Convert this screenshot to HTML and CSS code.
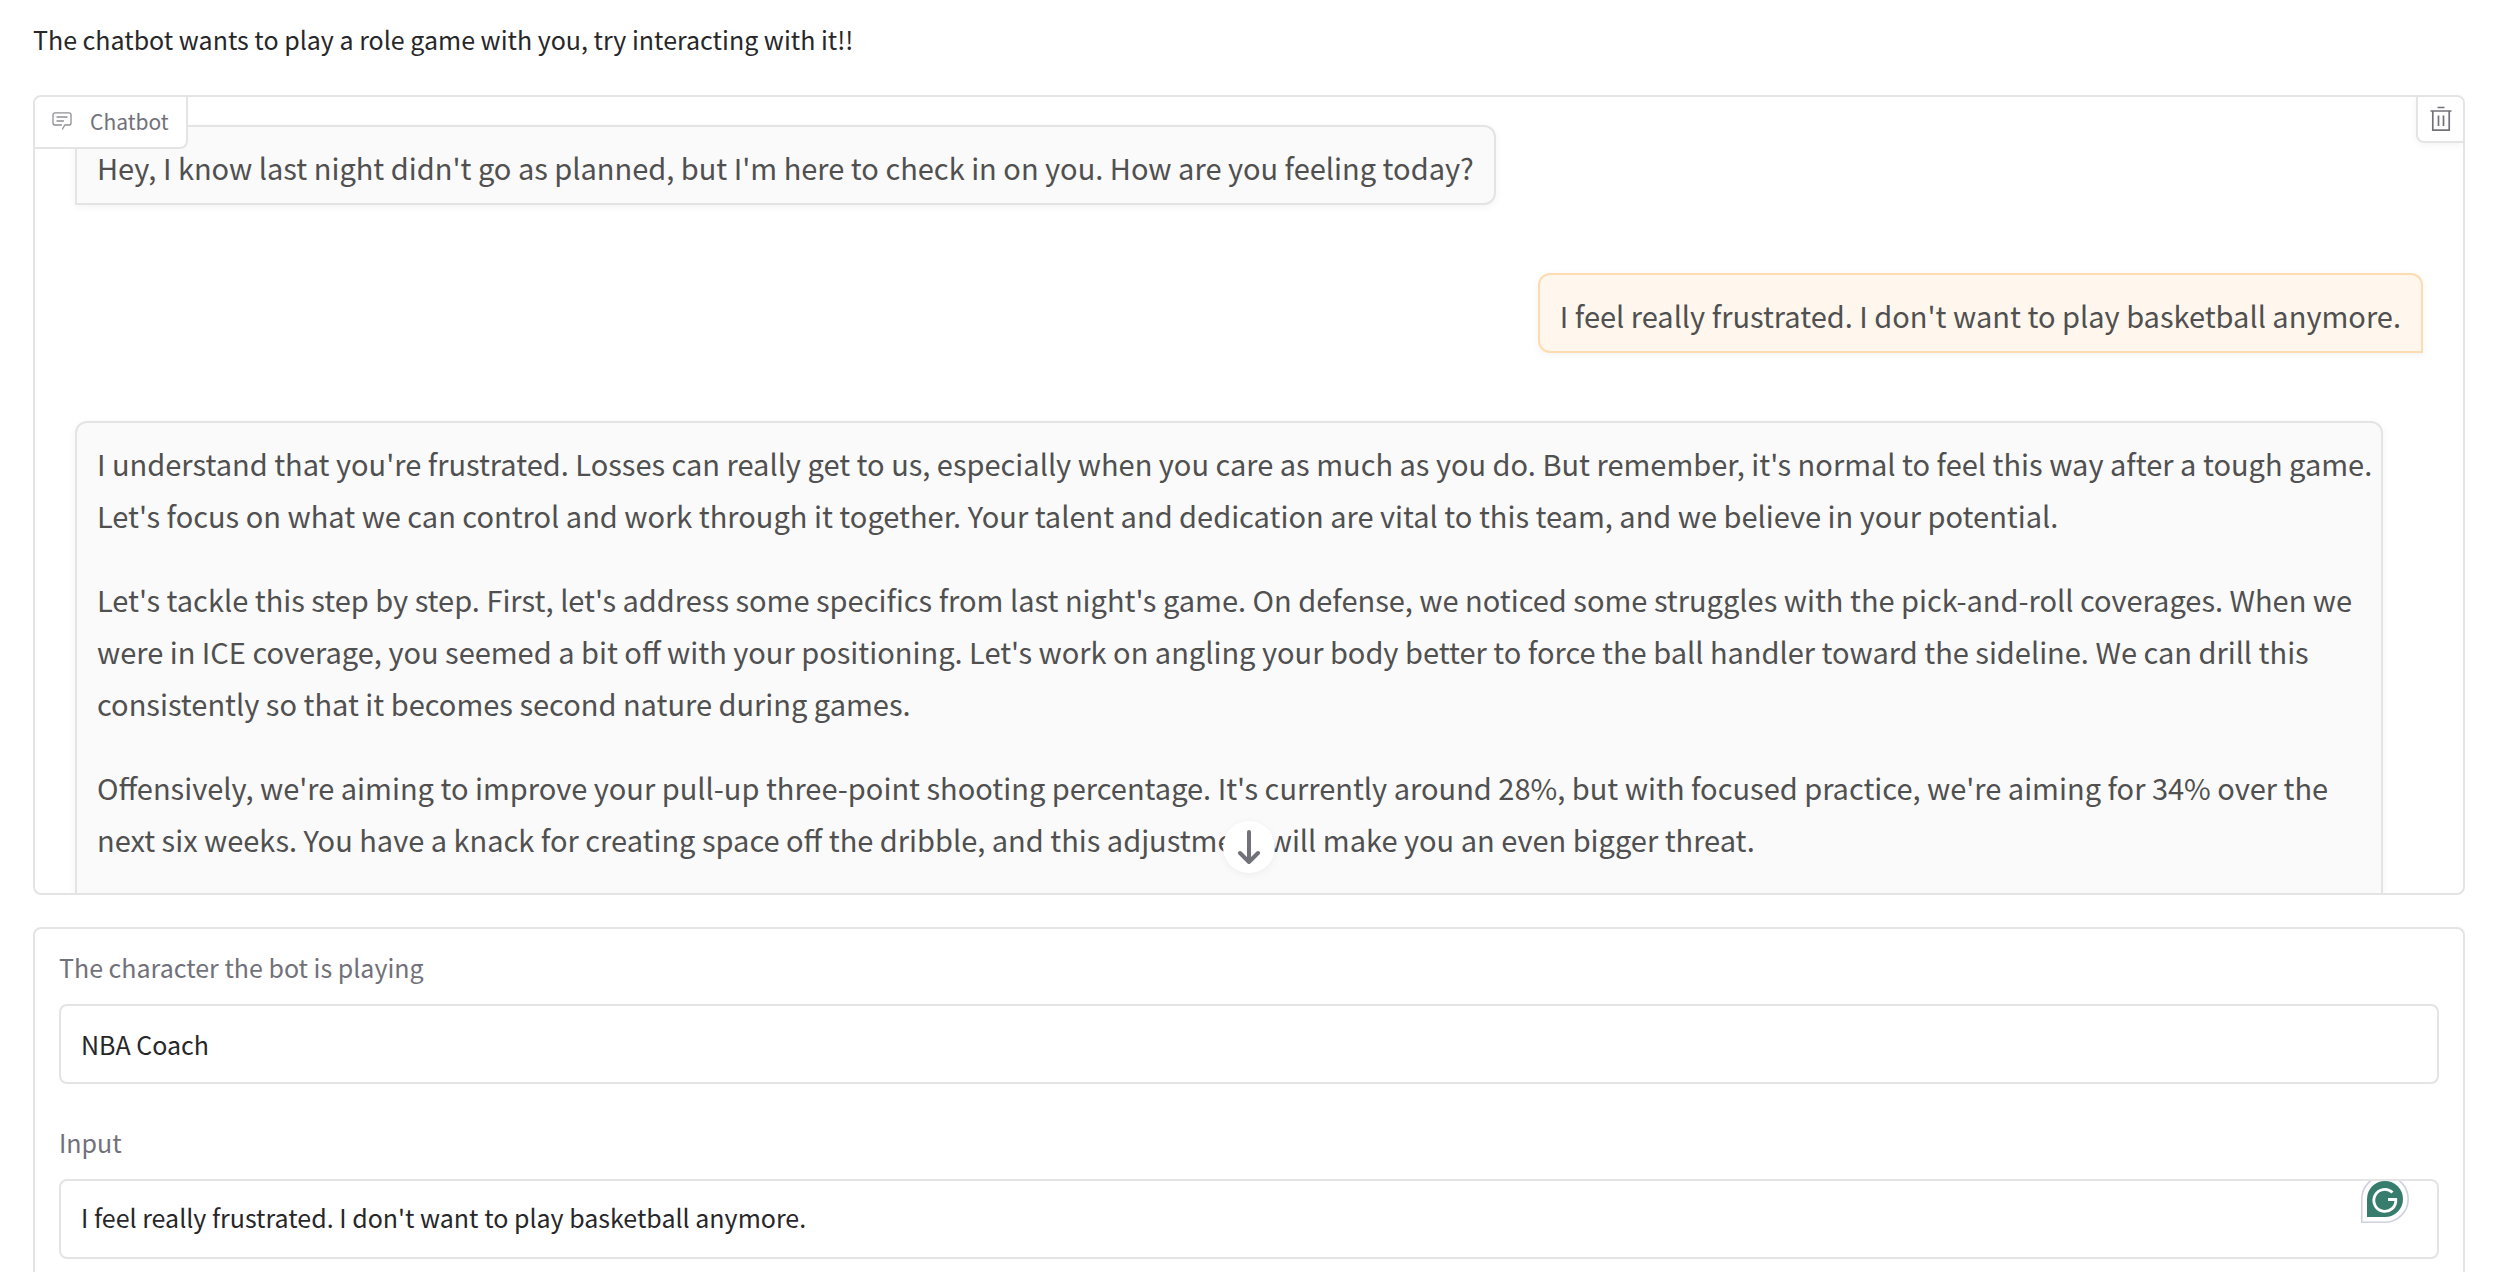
FILE: index.html
```html
<!DOCTYPE html>
<html lang="en">
<head>
<meta charset="utf-8">
<title>Role game chatbot</title>
<link rel="stylesheet" href="styles.css">
</head>
<body>
<main class="app">
  <p class="intro">The chatbot wants to play a role game with you, try interacting with it!!</p>

  <section class="chat" aria-label="Chatbot">
    <div class="chat-label">
      <svg class="chat-icon" viewBox="0 0 20 18" fill="none" stroke="currentColor" stroke-width="1.3" stroke-linecap="round" stroke-linejoin="round">
        <path d="M10.500 17l2.300-4H17a2 2 0 0 0 2-2V2.800a2 2 0 0 0-2-2H3a2 2 0 0 0-2 2V11a2 2 0 0 0 2 2h6.500M5 5h10M5 9h6.500"/>
      </svg>
      <span>Chatbot</span>
    </div>
    <button class="clear" type="button" aria-label="Clear">
      <svg class="clear-icon" viewBox="0 0 22 26" fill="none" stroke="currentColor" stroke-width="1.700">
        <path d="M7.500 1.500h7M.5 5h21M2.800 5v19.200h16.400V5M8.500 9.500v10.500M13.500 9.500v10.500"/>
      </svg>
    </button>

    <div class="messages">
      <div class="bubble bot">
        <p>Hey, I know last night didn't go as planned, but I'm here to check in on you. How are you feeling today?</p>
      </div>
      <div class="bubble user">
        <p>I feel really frustrated. I don't want to play basketball anymore.</p>
      </div>
      <div class="bubble bot continued">
        <p>I understand that you're frustrated. Losses can really get to us, especially when you care as much as you do. But remember, it's normal to feel this way after a tough game. Let's focus on what we can control and work through it together. Your talent and dedication are vital to this team, and we believe in your potential.</p>
        <p>Let's tackle this step by step. First, let's address some specifics from last night's game. On defense, we noticed some struggles with the pick-and-roll coverages. When we were in ICE coverage, you seemed a bit off with your positioning. Let's work on angling your body better to force the ball handler toward the sideline. We can drill this consistently so that it becomes second nature during games.</p>
        <p>Offensively, we're aiming to improve your pull-up three-point shooting percentage. It's currently around 28%, but with focused practice, we're aiming for 34% over the next six weeks. You have a knack for creating space off the dribble, and this adjustment will make you an even bigger threat.</p>
      </div>
    </div>

    <button class="scroll-down" type="button" aria-label="Scroll to bottom">
      <svg class="arrow-icon" viewBox="0 0 24 34" fill="none" stroke="currentColor" stroke-width="4" stroke-linecap="round" stroke-linejoin="round">
        <path d="M12 2v30M3 23l9 9 9-9"/>
      </svg>
    </button>
  </section>

  <form class="form">
    <div class="field">
      <label for="character">The character the bot is playing</label>
      <div class="control">
        <input class="box" id="character" type="text" value="NBA Coach">
      </div>
    </div>
    <div class="field">
      <label for="message">Input</label>
      <div class="control">
        <textarea class="box" id="message" rows="1">I feel really frustrated. I don't want to play basketball anymore.</textarea>
        <div class="assistant">
          <svg class="assistant-icon" viewBox="0 6 48 42" fill="none">
            <path d="M.8 47.200V24A23.200 23.200 0 1 1 24 47.200z" fill="#fff" stroke="#cfd0de" stroke-width="1.600"/>
            <path d="M6 42V24a18 18 0 1 1 18 18z" fill="#377d6e"/>
            <path d="M31.500 17.500A11 11 0 1 0 34.800 24.500H27" stroke="#fff" stroke-width="2.800"/>
          </svg>
        </div>
      </div>
    </div>
  </form>
</main>
</body>
</html>
```
FILE: styles.css
```css
* {
  box-sizing: border-box;
}

html,
body {
  height: 100%;
  margin: 0;
  overflow: hidden;
}

body {
  background: #fff;
  color: #27272a;
  font-family: "Noto Sans CJK SC", "Noto Sans", sans-serif;
  font-size: 25px;
  line-height: 40px;
}

p {
  margin: 0;
}

svg {
  display: block;
}

button {
  padding: 0;
  border: 0;
  background: #fff;
  color: #71717a;
}

.app {
  display: flex;
  flex-direction: column;
  gap: 32px;
  min-height: 100%;
  padding: 19px 35px 0 33px;
}

.intro {
  margin-bottom: 4px;
}

.chat {
  position: relative;
  max-height: 800px;
  flex: none;
  overflow: hidden;
  border: 2px solid #e4e4e4;
  border-radius: 8px;
}

.chat-label {
  position: absolute;
  top: 0;
  left: 0;
  z-index: 1;
  display: flex;
  align-items: center;
  gap: 18px;
  padding: 7px 17px 9px;
  border: solid #e4e4e4;
  border-width: 0 2px 2px 0;
  border-bottom-right-radius: 8px;
  background: #fff;
  color: #71717a;
  font-size: 21px;
  line-height: 34px;
}

.chat-icon {
  width: 20px;
  height: 18px;
  color: #8e8e95;
}

.clear {
  position: absolute;
  top: 0;
  right: 0;
  display: grid;
  place-items: center;
  width: 47px;
  height: 46px;
  border: solid #e4e4e4;
  border-width: 0 0 2px 2px;
  border-bottom-left-radius: 8px;
  box-shadow: 0 2px 8px #0000000d;
}

.clear-icon {
  width: 22px;
  height: 26px;
}

.messages {
  display: flex;
  flex-direction: column;
  align-items: flex-start;
  gap: 68px;
  padding: 28px 40px;
}

.bubble {
  display: flex;
  flex-direction: column;
  gap: 32px;
  max-width: calc(100% - 40px);
  padding: 14px 20px 10px;
  border: 2px solid #e4e4e4;
  border-radius: 12px;
  box-shadow: 0 2px 8px #0000000d;
  color: #505050;
  font-size: 29px;
  line-height: 52px;
}

.bot {
  border-bottom-left-radius: 0;
  background: #fafafa;
}

.user {
  align-self: flex-end;
  border-color: #fddcb0;
  border-bottom-right-radius: 0;
  background: #fff7ed;
}

.continued {
  padding-right: 8px;
  padding-bottom: 64px;
}

.scroll-down {
  position: absolute;
  bottom: 20px;
  left: 50%;
  display: grid;
  place-items: center;
  width: 52px;
  height: 52px;
  margin-left: -26px;
  border-radius: 50%;
  box-shadow: 0 2px 8px #0000000d;
}

.arrow-icon {
  width: 24px;
  height: 34px;
}

.form {
  display: flex;
  flex: 1 0 auto;
  flex-direction: column;
  gap: 38px;
  padding: 18px 24px;
  border: solid #e4e4e4;
  border-width: 2px 2px 0;
  border-radius: 8px 8px 0 0;
}

.field {
  display: flex;
  flex-direction: column;
  gap: 17px;
}

.field label {
  color: #71717a;
}

.control {
  position: relative;
  display: flex;
}

.box {
  width: 100%;
  height: 80px;
  margin: 0;
  padding: 16px 20px;
  border: 2px solid #e4e4e4;
  border-radius: 8px;
  outline: 0;
  background: #fff;
  color: #27272a;
  font: inherit;
  resize: none;
  overflow: hidden;
}

.assistant {
  position: absolute;
  top: 2px;
  right: 30px;
}

.assistant-icon {
  width: 48px;
  height: 42px;
}
```
